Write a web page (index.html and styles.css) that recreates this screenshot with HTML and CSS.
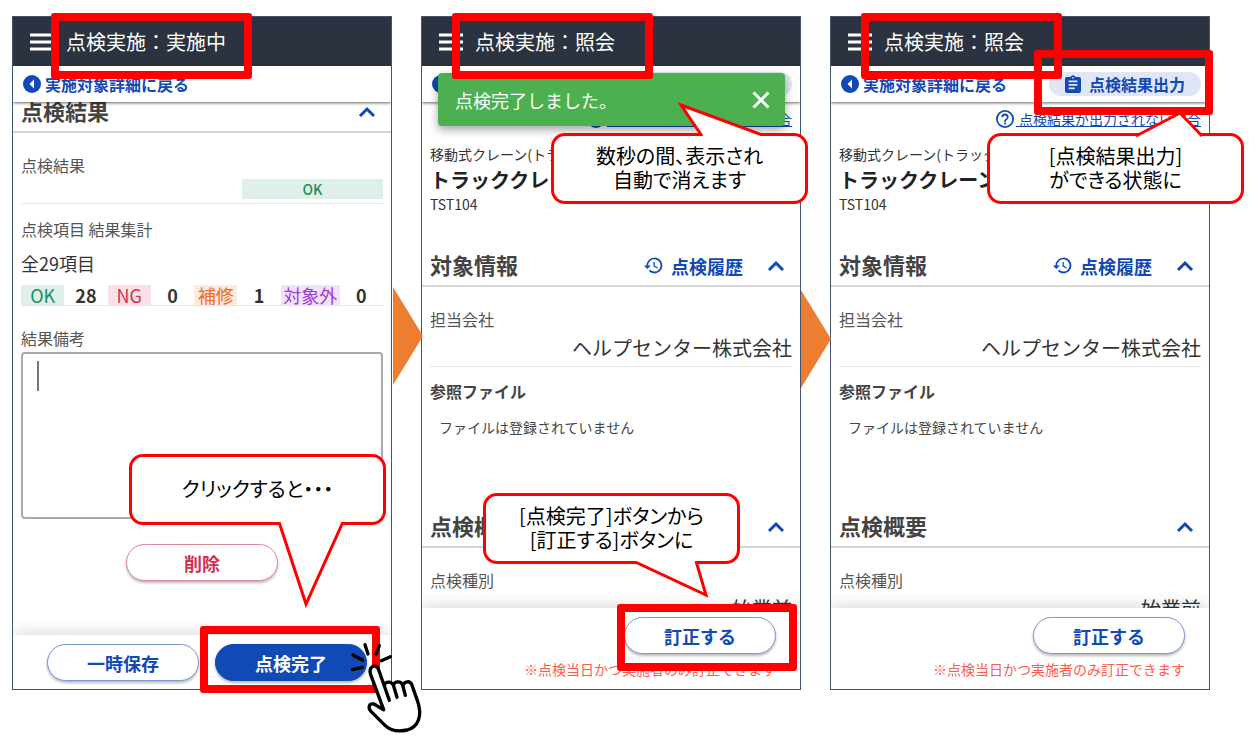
FILE: index.html
```html
<!DOCTYPE html>
<html lang="ja">
<head>
  <meta charset="UTF-8">
  <meta name="viewport" content="width=device-width, initial-scale=1">
  <title>点検実施：点検完了の流れ</title>
  <link rel="stylesheet" href="styles.css">
</head>
<body>

  <!-- 共通アイコン -->
  <svg class="sprite" aria-hidden="true">
    <symbol id="i-menu" viewBox="0 0 24 18">
      <path d="M0 2h24M0 9h24M0 16h24" stroke="currentColor" stroke-width="3"/>
    </symbol>
    <symbol id="i-back" viewBox="0 0 18 18">
      <circle cx="9" cy="9" r="9" fill="currentColor"/>
      <path d="M11 4.500v9L6.500 9z" fill="#fff"/>
    </symbol>
    <symbol id="i-chevron" viewBox="0 0 18 12">
      <path d="M2 10l7-7 7 7" fill="none" stroke="currentColor" stroke-width="3"/>
    </symbol>
    <symbol id="i-history" viewBox="0 0 24 24">
      <path d="M13 3a9 9 0 0 0-9 9H1l3.900 3.900.1.100L9 12H6a7 7 0 1 1 2.100 4.900l-1.400 1.400A9 9 0 1 0 13 3zm-1 5v5l4.300 2.500.7-1.200-3.500-2.100V8z" fill="currentColor"/>
    </symbol>
    <symbol id="i-clip" viewBox="3 1 18 20">
      <path d="M19 3h-4.200a3 3 0 0 0-5.600 0H5a2 2 0 0 0-2 2v14c0 1.100.9 2 2 2h14a2 2 0 0 0 2-2V5a2 2 0 0 0-2-2zm-7 0a1 1 0 1 1 0 2 1 1 0 0 1 0-2zm2 14H7v-2h7zm3-4H7v-2h10zm0-4H7V7h10z" fill="currentColor"/>
    </symbol>
    <symbol id="i-help" viewBox="2 2 20 20">
      <path d="M11 18h2v-2h-2zm1-16a10 10 0 1 0 0 20 10 10 0 0 0 0-20zm0 18a8 8 0 1 1 0-16 8 8 0 0 1 0 16zm0-14a4 4 0 0 0-4 4h2a2 2 0 1 1 4 0c0 2-3 1.750-3 5h2c0-2.250 3-2.500 3-5a4 4 0 0 0-4-4z" fill="currentColor"/>
    </symbol>
    <symbol id="i-close" viewBox="0 0 18 18">
      <path d="M1.500 1.500l15 15M16.500 1.500l-15 15" stroke="currentColor" stroke-width="3"/>
    </symbol>
  </svg>

  <main class="steps">

    <!-- 1: 実施中 -->
    <section class="step">
      <div class="phone">
        <header class="appbar">
          <button class="icon-btn" aria-label="メニュー"><svg class="menu"><use href="#i-menu"/></svg></button>
          <h1>点検実施：実施中</h1>
        </header>
        <nav class="subbar">
          <a class="back" href="#"><svg class="icon"><use href="#i-back"/></svg>実施対象詳細に戻る</a>
        </nav>
        <div class="content">
          <div class="head scrolled">
            <h2>点検結果</h2>
            <button class="icon-btn" aria-label="閉じる"><svg class="chevron"><use href="#i-chevron"/></svg></button>
          </div>
          <div class="field">
            <div class="label">点検結果</div>
            <div class="result ok">OK</div>
          </div>
          <div class="field summary">
            <div class="label">点検項目 結果集計</div>
            <div class="total">全29項目</div>
            <div class="counts">
              <span class="tag ok">OK</span><b>28</b>
              <span class="tag ng">NG</span><b>0</b>
              <span class="tag repair">補修</span><b>1</b>
              <span class="tag out">対象外</span><b>0</b>
            </div>
          </div>
          <div class="field note">
            <label class="label" for="biko">結果備考</label>
            <textarea id="biko"></textarea>
            <span class="caret"></span>
          </div>
          <button class="btn delete">削除</button>
        </div>
        <footer class="footer">
          <div class="actions">
            <button class="btn">一時保存</button>
            <button class="btn primary">点検完了</button>
          </div>
        </footer>
      </div>

      <div class="frame frame-title"></div>
      <div class="frame frame-done"></div>
      <div class="callout callout-click">クリックすると・・・
        <svg class="tail" viewBox="0 0 70 88"><path d="M4 0L31 82 68 0" fill="#fff" stroke="#f00" stroke-width="3"/></svg>
      </div>
      <svg class="arrow arrow-first" viewBox="0 0 30 98"><path d="M0 0l30 49L0 98z" fill="#ed7d31"/></svg>
      <svg class="hand" viewBox="0 0 270 315" fill="none" stroke="#000" stroke-width="10" stroke-linecap="round" stroke-linejoin="round">
        <path d="M75 29l9 28M118 32l-10 25M39 60l29 16M151 65l-27 12M37 104l30-7"/>
        <path d="M131 224L92 119C84 94 107 85 115 102L132 150C137 139 154 138 160 150C164 139 182 136 188 150C196 138 210 137 215 148L233 199C248 244 234 276 202 285C173 291 149 285 135 271L93 229C83 218 87 204 101 207C107 208 111 214 131 224z" fill="#fff"/>
        <path d="M132 150l16 46M160 150l11 37M188 150l8 31"/>
      </svg>
    </section>

    <!-- 2: 完了直後 -->
    <section class="step">
      <div class="phone">
        <header class="appbar">
          <button class="icon-btn" aria-label="メニュー"><svg class="menu"><use href="#i-menu"/></svg></button>
          <h1>点検実施：照会</h1>
        </header>
        <nav class="subbar">
          <a class="back" href="#"><svg class="icon"><use href="#i-back"/></svg>実施対象詳細に戻る</a>
          <button class="export"><svg class="clip"><use href="#i-clip"/></svg>点検結果出力</button>
        </nav>
        <div class="content">
          <a class="help" href="#"><svg class="icon"><use href="#i-help"/></svg><span>&nbsp;点検結果が出力されない場合</span></a>
          <div class="target">
            <div class="kind">移動式クレーン(トラッククレーン)</div>
            <div class="name">トラッククレーン</div>
            <div class="kind">TST104</div>
          </div>
          <div class="head">
            <h2>対象情報</h2>
            <a class="history" href="#"><svg class="clock"><use href="#i-history"/></svg>点検履歴</a>
            <button class="icon-btn" aria-label="閉じる"><svg class="chevron"><use href="#i-chevron"/></svg></button>
          </div>
          <div class="field">
            <div class="label">担当会社</div>
            <div class="value">ヘルプセンター株式会社</div>
          </div>
          <div class="files">
            <h3>参照ファイル</h3>
            <p>ファイルは登録されていません</p>
          </div>
          <div class="head">
            <h2>点検概要</h2>
            <button class="icon-btn" aria-label="閉じる"><svg class="chevron"><use href="#i-chevron"/></svg></button>
          </div>
          <div class="field cut">
            <div class="label">点検種別</div>
            <div class="value">始業前</div>
          </div>
        </div>
        <footer class="footer">
          <div class="actions">
            <button class="btn">訂正する</button>
          </div>
          <p class="caution">※点検当日かつ実施者のみ訂正できます</p>
        </footer>
      </div>

      <div class="toast">
        <span>点検完了しました。</span>
        <button class="icon-btn" aria-label="閉じる"><svg class="icon"><use href="#i-close"/></svg></button>
      </div>
      <div class="frame frame-title"></div>
      <div class="frame frame-fix"></div>
      <div class="callout callout-toast">数秒の間、表示され<br>自動で消えます
        <svg class="tail" viewBox="0 0 92 34"><path d="M24 34L3 3l84 31" fill="#fff" stroke="#f00" stroke-width="3"/></svg>
      </div>
      <div class="callout callout-fix">[点検完了]ボタンから<br>[訂正する]ボタンに
        <svg class="tail" viewBox="0 0 80 40"><path d="M2 0l73 34-10-34" fill="#fff" stroke="#f00" stroke-width="3"/></svg>
      </div>
      <svg class="arrow arrow-second" viewBox="0 0 30 98"><path d="M0 0l30 49L0 98z" fill="#ed7d31"/></svg>
    </section>

    <!-- 3: 照会 -->
    <section class="step">
      <div class="phone">
        <header class="appbar">
          <button class="icon-btn" aria-label="メニュー"><svg class="menu"><use href="#i-menu"/></svg></button>
          <h1>点検実施：照会</h1>
        </header>
        <nav class="subbar">
          <a class="back" href="#"><svg class="icon"><use href="#i-back"/></svg>実施対象詳細に戻る</a>
          <button class="export"><svg class="clip"><use href="#i-clip"/></svg>点検結果出力</button>
        </nav>
        <div class="content">
          <a class="help" href="#"><svg class="icon"><use href="#i-help"/></svg><span>&nbsp;点検結果が出力されない場合</span></a>
          <div class="target">
            <div class="kind">移動式クレーン(トラッククレーン)</div>
            <div class="name">トラッククレーン</div>
            <div class="kind">TST104</div>
          </div>
          <div class="head">
            <h2>対象情報</h2>
            <a class="history" href="#"><svg class="clock"><use href="#i-history"/></svg>点検履歴</a>
            <button class="icon-btn" aria-label="閉じる"><svg class="chevron"><use href="#i-chevron"/></svg></button>
          </div>
          <div class="field">
            <div class="label">担当会社</div>
            <div class="value">ヘルプセンター株式会社</div>
          </div>
          <div class="files">
            <h3>参照ファイル</h3>
            <p>ファイルは登録されていません</p>
          </div>
          <div class="head">
            <h2>点検概要</h2>
            <button class="icon-btn" aria-label="閉じる"><svg class="chevron"><use href="#i-chevron"/></svg></button>
          </div>
          <div class="field cut">
            <div class="label">点検種別</div>
            <div class="value">始業前</div>
          </div>
        </div>
        <footer class="footer">
          <div class="actions">
            <button class="btn">訂正する</button>
          </div>
          <p class="caution">※点検当日かつ実施者のみ訂正できます</p>
        </footer>
      </div>

      <div class="frame frame-title"></div>
      <div class="frame frame-export"></div>
      <div class="callout callout-export">[点検結果出力]<br>ができる状態に
        <svg class="tail" viewBox="0 0 72 28"><path d="M2 26l44-23 22 23" fill="#fff" stroke="#f00" stroke-width="3"/></svg>
      </div>
    </section>

  </main>

</body>
</html>
```
FILE: styles.css
```css
* {
  box-sizing: border-box;
}

body {
  margin: 0;
  background: #fff;
  color: #333;
  font-family: "Noto Sans CJK JP", sans-serif;
  font-size: 16px;
  line-height: 24px;
}

h1, h2, h3, p {
  margin: 0;
}

button {
  font-family: inherit;
  cursor: pointer;
}

a {
  color: #1149b5;
  text-decoration: none;
}

svg {
  display: block;
  flex-shrink: 0;
}

.sprite {
  position: absolute;
  width: 0;
  height: 0;
}

.steps {
  display: grid;
  grid-template-columns: repeat(3, 1fr);
  gap: 29px;
  padding: 16px 49px 54px 12px;
}

.step {
  position: relative;
  display: flex;
}

.phone {
  flex: 1;
  min-width: 0;
  display: flex;
  flex-direction: column;
  border: 1px solid #44546a;
  background: #fff;
  overflow: hidden;
  isolation: isolate;
}

/* ヘッダー */
.appbar {
  display: flex;
  align-items: center;
  gap: 12px;
  height: 49px;
  padding-left: 17px;
  background: #2c3340;
  color: #fff;
}

.appbar h1 {
  font-size: 20px;
  font-weight: 400;
}

.icon-btn {
  padding: 0;
  border: none;
  background: none;
  color: inherit;
}

.icon {
  width: 18px;
  height: 18px;
}

.menu {
  width: 24px;
  height: 18px;
}

.chevron {
  width: 18px;
  height: 12px;
  color: #1149b5;
}

.subbar {
  position: relative;
  z-index: 1;
  display: flex;
  align-items: center;
  justify-content: space-between;
  height: 36px;
  padding: 0 8px 0 10px;
  background: #fff;
  box-shadow: 0 1px 3px rgba(0, 0, 0, 0.6);
}

.back {
  display: flex;
  align-items: center;
  gap: 4px;
  font-weight: 700;
}

.export {
  display: flex;
  align-items: center;
  gap: 8px;
  height: 24px;
  padding: 0 16px;
  border: none;
  border-radius: 12px;
  background: #e0e6f5;
  color: #1149b5;
  font-size: 16px;
  font-weight: 700;
}

.clip {
  width: 16px;
  height: 18px;
}

/* 本文 */
.content {
  flex: 1;
}

.head {
  display: flex;
  align-items: center;
  gap: 24px;
  height: 33px;
  padding: 0 15px 8px 8px;
  border-bottom: 2px solid #d6d6d6;
}

.head h2 {
  flex: 1;
  align-self: flex-start;
  color: #444;
  font-size: 22px;
  font-weight: 700;
  line-height: 20px;
}

.head.scrolled {
  margin-top: -2px;
}

.history {
  display: flex;
  align-items: center;
  gap: 7px;
  font-size: 18px;
  font-weight: 700;
}

.clock {
  width: 21px;
  height: 21px;
}

.field {
  margin: 0 8px;
  padding: 20px 0 4px;
  border-bottom: 1px solid #e6e6e6;
}

.label {
  display: block;
  color: #555;
}

.value {
  margin-top: 3px;
  font-size: 20px;
  line-height: 28px;
  text-align: right;
}

.result {
  width: 39%;
  height: 20px;
  margin: 2px 0 0 auto;
  font-size: 14px;
  font-weight: 500;
  line-height: 20px;
  text-align: center;
}

.ok {
  background: #dff0e8;
  color: #1d8f62;
}

.ng {
  background: #fae1e5;
  color: #d83050;
}

.repair {
  background: #fdebe0;
  color: #ee6a1e;
}

.out {
  background: #f1e2fa;
  color: #a03ad8;
}

.summary {
  padding: 13px 0 0;
}

.total {
  margin-top: 10px;
  font-size: 18px;
}

.counts {
  display: grid;
  grid-template-columns: repeat(6, 1fr) 59px 1fr;
  margin-top: 10px;
  font-size: 18px;
  line-height: 20px;
  text-align: center;
}

.note {
  position: relative;
  padding-bottom: 0;
  border: none;
}

.note textarea {
  display: block;
  width: 100%;
  height: 167px;
  margin-top: 2px;
  padding: 8px 14px;
  border: 2px solid #aaa;
  border-radius: 4px;
  font-family: inherit;
  font-size: 18px;
  resize: none;
}

.caret {
  position: absolute;
  left: 16px;
  bottom: 128px;
  width: 2px;
  height: 30px;
  background: #777;
}

.help {
  display: flex;
  justify-content: flex-end;
  align-items: center;
  gap: 2px;
  height: 26px;
  padding: 8px 8px 0;
  font-size: 14px;
}

.help span {
  text-decoration: underline;
}

.target {
  margin: 16px 8px 40px;
}

.kind {
  font-size: 14px;
  line-height: 20px;
}

.name {
  margin-top: 2px;
  color: #222;
  font-size: 20px;
  font-weight: 700;
  line-height: 28px;
}

.files {
  padding: 12px 8px 78px;
  color: #444;
}

.files h3 {
  font-size: 16px;
  font-weight: 700;
}

.files p {
  margin: 14px 9px 0;
  font-size: 14px;
  line-height: 20px;
}

.cut {
  padding-bottom: 0;
  border: none;
}

/* 下半分はフッターの裏に隠れる */
.cut .value {
  height: 12px;
}

/* フッター */
.footer {
  position: relative;
  padding: 9px 24px 8px;
  background: #fff;
  box-shadow: 0 -2px 14px rgba(0, 0, 0, 0.16);
}

.actions {
  display: flex;
  justify-content: flex-end;
  gap: 16px;
}

.btn {
  width: 152px;
  height: 37px;
  padding: 0;
  border: 1px solid #7896d4;
  border-radius: 19px;
  background: #fff;
  box-shadow: 0 2px 3px rgba(0, 0, 0, 0.28);
  color: #1149b5;
  font-size: 18px;
  font-weight: 700;
}

.btn.primary {
  border-color: #1149b5;
  background: #1149b5;
  color: #fff;
}

.btn.delete {
  display: block;
  margin: 25px auto 54px;
  border-color: #e08898;
  color: #cf3050;
}

.caution {
  margin: 5px 0 2px;
  color: #ff5a4d;
  font-size: 14px;
  line-height: 20px;
  text-align: right;
}

.toast {
  position: absolute;
  top: 57px;
  left: 17px;
  right: 16px;
  display: flex;
  align-items: center;
  justify-content: space-between;
  height: 53px;
  padding: 0 15px 0 17px;
  border-radius: 4px;
  background: #4caf50;
  box-shadow: 0 4px 10px rgba(0, 0, 0, 0.35);
  color: #fff;
  font-size: 18px;
}

/* 強調枠 */
.frame {
  position: absolute;
  border: 8px solid #f00;
  border-radius: 3px;
}

.frame-title {
  top: -3px;
  left: 31px;
  width: 201px;
  height: 66px;
}

.step:first-child .frame-title {
  left: 39px;
}

.frame-done {
  right: 12px;
  bottom: -3px;
  width: 180px;
  height: 67px;
}

.frame-fix {
  right: 4px;
  bottom: 19px;
  width: 180px;
  height: 67px;
}

.frame-export {
  top: 34px;
  right: -3px;
  width: 179px;
  height: 65px;
}

/* 吹き出し */
.callout {
  position: absolute;
  z-index: 2;
  display: flow-root;
  width: 257px;
  height: 71px;
  padding: 8px 0;
  border: 3px solid #f00;
  border-radius: 14px;
  background: #fff;
  color: #000;
  font-feature-settings: "palt";
  font-size: 20px;
  text-align: center;
}

.tail {
  position: absolute;
}

.callout-click {
  top: 438px;
  right: 6px;
  padding: 20px 0;
}

.callout-click .tail {
  top: 65px;
  left: 143px;
  width: 70px;
  height: 88px;
}

.callout-toast {
  top: 117px;
  right: -7px;
}

.callout-toast .tail {
  top: -34px;
  left: 124px;
  width: 92px;
  height: 34px;
}

.callout-fix {
  top: 477px;
  right: 61px;
}

.callout-fix .tail {
  top: 65px;
  left: 145px;
  width: 80px;
  height: 40px;
}

.callout-export {
  top: 117px;
  right: -34px;
}

.callout-export .tail {
  top: -26px;
  left: 144px;
  width: 72px;
  height: 28px;
}

.arrow {
  position: absolute;
  z-index: 1;
  right: -31px;
  width: 30px;
  height: 98px;
}

.arrow-first {
  top: 271px;
}

.arrow-second {
  top: 274px;
  right: -30px;
}

.hand {
  position: absolute;
  z-index: 1;
  right: -38px;
  bottom: -50px;
  width: 90px;
  height: 105px;
}
```
